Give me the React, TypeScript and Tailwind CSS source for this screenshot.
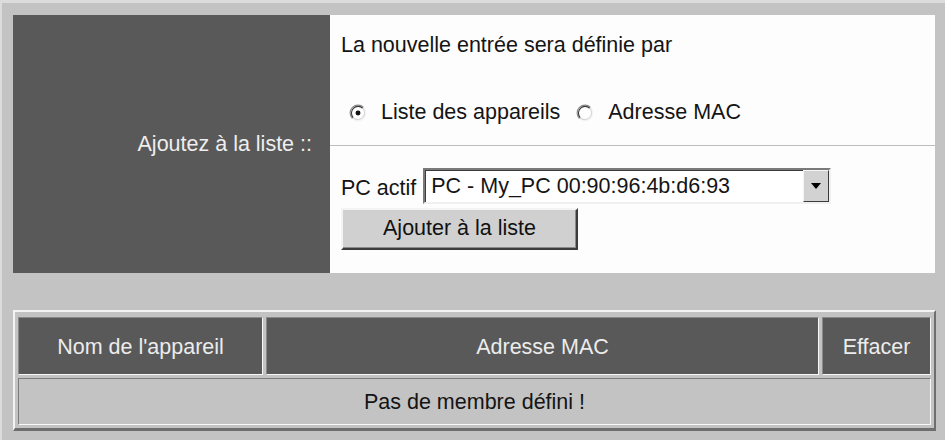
import React from 'react'

function Radio({ checked }: { checked?: boolean }) {
  return (
    <svg width="18" height="18" viewBox="0 0 16 16" className="shrink-0">
      <circle cx="8" cy="8" r="6" fill="#ffffff" />
      <path d="M3.05 12.95 A7 7 0 0 1 12.95 3.05" fill="none" stroke="#8a8a8a" strokeWidth="1" />
      <path d="M12.95 3.05 A7 7 0 0 1 3.05 12.95" fill="none" stroke="#f4f4f4" strokeWidth="1" />
      <path d="M3.76 12.24 A6 6 0 0 1 12.24 3.76" fill="none" stroke="#3a3a3a" strokeWidth="1" />
      <path d="M12.24 3.76 A6 6 0 0 1 3.76 12.24" fill="none" stroke="#d6d6d6" strokeWidth="1" />
      {checked && <circle cx="8" cy="8" r="2.2" fill="#111111" />}
    </svg>
  )
}

export default function App() {
  return (
    <div className="w-[945px] h-[440px] bg-[#c3c3c3] shadow-[inset_2px_3px_0_#dcdcdc] pt-[15px] pl-[13px] font-['Liberation_Sans',Arial,sans-serif] text-[21.5px] leading-none">
      {/* Ajout d'une entrée */}
      <div className="flex w-[922px] h-[258px]">
        <div className="w-[317px] bg-[#595959] flex items-center justify-end pr-[18px] pt-[2px] text-[#eeeeee]">
          Ajoutez à la liste ::
        </div>
        <div className="flex-1 bg-[#fdfdfd] flex flex-col text-[#141414]">
          <div className="h-[130px] pt-[15px] pl-[11px]">
            <p className="leading-[30px]">La nouvelle entrée sera définie par</p>
            <div className="mt-[38px] h-[30px] flex items-center ml-[8px]">
              <Radio checked />
              <span className="ml-[14px]">Liste des appareils</span>
              <span className="ml-[16px]">
                <Radio />
              </span>
              <span className="ml-[14px]">Adresse MAC</span>
            </div>
          </div>
          <div className="h-px bg-[#bdbdbd]" />
          <div className="flex-1 pt-[22px] pl-[11px]">
            <div className="flex items-center gap-[7px]">
              <span className="pt-[6px]">PC actif</span>
              <div className="w-[408px] h-[36px] flex border-2 border-t-[#7a7a7a] border-l-[#7a7a7a] border-b-[#f0f0f0] border-r-[#f0f0f0] shadow-[inset_1px_1px_0_#3c3c3c] bg-white">
                <span className="flex-1 flex items-center pl-[6px] pt-[2px]">PC - My_PC 00:90:96:4b:d6:93</span>
                <div className="w-[26px] bg-[#d2d2d2] flex items-center justify-center border border-t-[#f4f4f4] border-l-[#f4f4f4] border-b-[#3c3c3c] border-r-[#3c3c3c]">
                  <svg width="10" height="6" viewBox="0 0 10 6">
                    <path d="M0 0 H10 L5 6 Z" fill="#000000" />
                  </svg>
                </div>
              </div>
            </div>
            <button className="mt-[4px] w-[237px] h-[42px] bg-[#d0d0d0] border-2 border-t-[#f4f4f4] border-l-[#f4f4f4] border-b-[#3c3c3c] border-r-[#3c3c3c] shadow-[inset_-1px_-1px_0_#8a8a8a] text-[#111111] flex items-center justify-center pb-[1px]">
              Ajouter à la liste
            </button>
          </div>
        </div>
      </div>

      {/* Liste des membres */}
      <div className="mt-[37px] w-[923px] border-2 border-b-[3px] border-t-[#f4f4f4] border-l-[#f4f4f4] border-b-[#6e6e6e] border-r-[#6e6e6e] pt-[5px] px-[3px] pb-[3px] grid grid-cols-[245px_1fr_109px] gap-[3px]">
        <div className="h-[58px] bg-[#595959] border border-t-[#8a8a8a] border-l-[#8a8a8a] border-b-[#f8f8f8] border-r-[#f8f8f8] flex items-center justify-center text-[#ececec] pt-[3px]">
          Nom de l'appareil
        </div>
        <div className="h-[58px] bg-[#595959] border border-t-[#8a8a8a] border-l-[#8a8a8a] border-b-[#f8f8f8] border-r-[#f8f8f8] flex items-center justify-center text-[#ececec] pt-[3px]">
          Adresse MAC
        </div>
        <div className="h-[58px] bg-[#595959] border border-t-[#8a8a8a] border-l-[#8a8a8a] border-b-[#f8f8f8] border-r-[#f8f8f8] flex items-center justify-center text-[#ececec] pt-[3px]">
          Effacer
        </div>
        <div className="col-span-3 h-[47px] bg-[#c3c3c3] border border-t-[#7c7c7c] border-l-[#7c7c7c] border-b-[#f8f8f8] border-r-[#f8f8f8] flex items-center justify-center text-[#141414] pt-[2px]">
          Pas de membre défini !
        </div>
      </div>
    </div>
  )
}
